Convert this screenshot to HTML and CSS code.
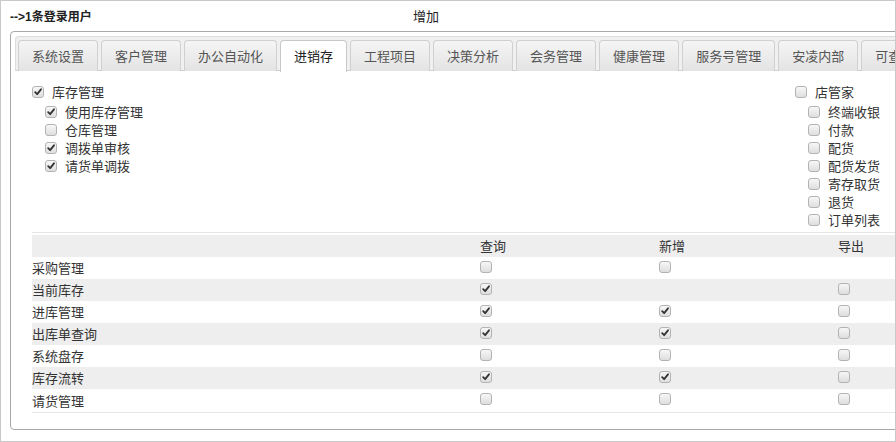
FILE: index.html
```html
<!DOCTYPE html>
<html lang="zh-CN">
<head>
<meta charset="utf-8">
<link rel="stylesheet" href="styles.css">
</head>
<body>
<div class="frame">
  <div class="topbar">
    <span class="login">--&gt;1条登录用户</span>
    <span class="add">增加</span>
  </div>
  <div class="panel">
    <ul class="tabs">
      <li class="tab">系统设置</li>
      <li class="tab">客户管理</li>
      <li class="tab">办公自动化</li>
      <li class="tab active">进销存</li>
      <li class="tab">工程项目</li>
      <li class="tab">决策分析</li>
      <li class="tab">会务管理</li>
      <li class="tab">健康管理</li>
      <li class="tab">服务号管理</li>
      <li class="tab">安凌内部</li>
      <li class="tab">可查询</li>
    </ul>
    <div class="content">
      <div class="trees">
        <div class="tree">
          <div class="node"><span class="cb on"><svg viewBox="0 0 12 12"><path d="M2.6 6.2 L5 8.6 L9.6 2.8"/></svg></span>库存管理</div>
          <div class="children">
            <div class="node"><span class="cb on"><svg viewBox="0 0 12 12"><path d="M2.6 6.2 L5 8.6 L9.6 2.8"/></svg></span>使用库存管理</div>
            <div class="node"><span class="cb"></span>仓库管理</div>
            <div class="node"><span class="cb on"><svg viewBox="0 0 12 12"><path d="M2.6 6.2 L5 8.6 L9.6 2.8"/></svg></span>调拨单审核</div>
            <div class="node"><span class="cb on"><svg viewBox="0 0 12 12"><path d="M2.6 6.2 L5 8.6 L9.6 2.8"/></svg></span>请货单调拨</div>
          </div>
        </div>
        <div class="tree">
          <div class="node"><span class="cb"></span>店管家</div>
          <div class="children">
            <div class="node"><span class="cb"></span>终端收银</div>
            <div class="node"><span class="cb"></span>付款</div>
            <div class="node"><span class="cb"></span>配货</div>
            <div class="node"><span class="cb"></span>配货发货</div>
            <div class="node"><span class="cb"></span>寄存取货</div>
            <div class="node"><span class="cb"></span>退货</div>
            <div class="node"><span class="cb"></span>订单列表</div>
          </div>
        </div>
      </div>
      <div class="table">
        <div class="row head"><div></div><div>查询</div><div>新增</div><div>导出</div></div>
        <div class="row"><div>采购管理</div><div><span class="cb"></span></div><div><span class="cb"></span></div><div></div></div>
        <div class="row alt"><div>当前库存</div><div><span class="cb on"><svg viewBox="0 0 12 12"><path d="M2.6 6.2 L5 8.6 L9.6 2.8"/></svg></span></div><div></div><div><span class="cb"></span></div></div>
        <div class="row"><div>进库管理</div><div><span class="cb on"><svg viewBox="0 0 12 12"><path d="M2.6 6.2 L5 8.6 L9.6 2.8"/></svg></span></div><div><span class="cb on"><svg viewBox="0 0 12 12"><path d="M2.6 6.2 L5 8.6 L9.6 2.8"/></svg></span></div><div><span class="cb"></span></div></div>
        <div class="row alt"><div>出库单查询</div><div><span class="cb on"><svg viewBox="0 0 12 12"><path d="M2.6 6.2 L5 8.6 L9.6 2.8"/></svg></span></div><div><span class="cb on"><svg viewBox="0 0 12 12"><path d="M2.6 6.2 L5 8.6 L9.6 2.8"/></svg></span></div><div><span class="cb"></span></div></div>
        <div class="row"><div>系统盘存</div><div><span class="cb"></span></div><div><span class="cb"></span></div><div><span class="cb"></span></div></div>
        <div class="row alt"><div>库存流转</div><div><span class="cb on"><svg viewBox="0 0 12 12"><path d="M2.6 6.2 L5 8.6 L9.6 2.8"/></svg></span></div><div><span class="cb on"><svg viewBox="0 0 12 12"><path d="M2.6 6.2 L5 8.6 L9.6 2.8"/></svg></span></div><div><span class="cb"></span></div></div>
        <div class="row last"><div>请货管理</div><div><span class="cb"></span></div><div><span class="cb"></span></div><div><span class="cb"></span></div></div>
      </div>
    </div>
  </div>
</div>
</body>
</html>
```
FILE: styles.css
```css
* { box-sizing: border-box; }
html, body { margin: 0; padding: 0; background: #fff; }
body {
  font-family: "Liberation Sans", "Noto Sans CJK SC", sans-serif;
  font-size: 13px;
  color: #333;
}
.frame {
  width: 896px;
  height: 442px;
  border: 1px solid #c9c9c9;
  overflow: hidden;
  position: relative;
}
.topbar {
  height: 30px;
  display: flex;
  align-items: center;
  padding-left: 9px;
  padding-bottom: 1px;
}
.login {
  font-weight: bold;
  font-size: 12px;
  color: #222;
  width: 403px;
}
.add {
  font-size: 13px;
  color: #222;
}
.panel {
  margin-left: 9px;
  width: 920px;
  height: 399px;
  border: 1px solid #a8a8a8;
  border-radius: 4px;
  padding: 4px 4px 0 4px;
}
.tabs {
  list-style: none;
  margin: 0;
  padding: 3px 0 0 2px;
  height: 35px;
  display: flex;
  gap: 3px;
  background: #f0f0f0;
  border: 1px solid #dcdcdc;
  border-radius: 4px 4px 0 0;
  border-bottom-color: #cfcfcf;
}
.tab {
  height: 31px;
  padding: 0 13px;
  border: 1px solid #d0d0d0;
  border-bottom: none;
  border-radius: 4px 4px 0 0;
  background: linear-gradient(#f5f5f5, #e3e3e3);
  color: #555;
  font-family: "Noto Sans CJK SC", sans-serif;
  font-size: 13px;
  line-height: 30px;
  white-space: nowrap;
  flex: none;
}
.tab.active {
  background: #fff;
  border-color: #c8c8c8;
  color: #222;
  height: 32px;
  position: relative;
  z-index: 1;
}
.content {
  padding: 12px 0 0 17px;
  font-family: "Noto Sans CJK SC", sans-serif;
}
.trees {
  display: grid;
  grid-template-columns: 763px auto;
  border-bottom: 1px solid #e6e6e6;
  padding-bottom: 3px;
  width: 900px;
}
.node {
  display: flex;
  align-items: center;
  height: 18px;
  line-height: 18px;
  white-space: nowrap;
  color: #333;
}
.node .cb { margin-right: 8px; }
.children {
  padding-left: 13px;
  padding-top: 2px;
}
.cb {
  display: inline-block;
  width: 12px;
  height: 12px;
  border: 1px solid #b3b3b3;
  border-radius: 3px;
  background: linear-gradient(#f7f7f7, #dedede);
  flex: none;
  vertical-align: middle;
  position: relative;
}
.cb svg {
  position: absolute;
  left: 0;
  top: 0;
  width: 10px;
  height: 10px;
}
.cb svg path {
  fill: none;
  stroke: #333;
  stroke-width: 2.2;
  stroke-linecap: round;
  stroke-linejoin: round;
}
.table {
  margin-top: 2px;
  width: 900px;
}
.row {
  display: grid;
  grid-template-columns: 448px 179px 179px 1fr;
  height: 22px;
  align-items: center;
  line-height: 22px;
  color: #333;
}
.row > div { display: flex; align-items: center; height: 22px; }
.row .cb { margin-top: -3px; }
.row.head, .row.alt { background: #eeeeee; }
.row.last { border-bottom: 1px solid #e6e6e6; height: 24px; }
```
